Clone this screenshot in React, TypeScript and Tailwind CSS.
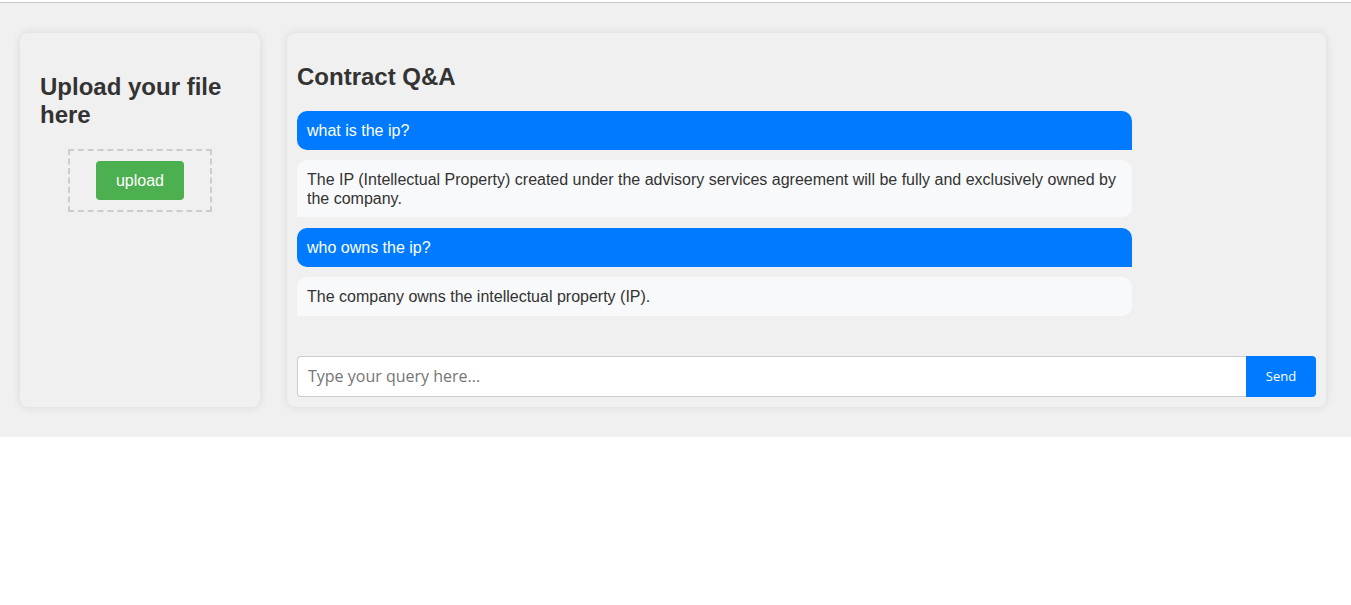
import React from "react";

export default function App() {
  return (
    <div className="min-h-[605px] bg-white" style={{ fontFamily: '"Liberation Sans", Arial, sans-serif' }}>
      <div className="h-[2px] bg-white" />
      <div className="border-t border-[#c8c8c8] bg-[#f0f0f0] h-[435px] pt-[30px] pl-[20px] flex gap-[27px]">
        <div className="w-[240px] h-[374px] bg-[#f0f0f0] rounded-[8px] shadow-[0_0_10px_rgba(0,0,0,0.1)] p-[20px] flex flex-col">
          <h2 className="mt-[20px] mb-[20px] text-[24px] leading-[28px] font-bold text-[#333]">
            Upload your file here
          </h2>
          <div className="mx-auto w-[144px] h-[63px] border-2 border-dashed border-[#ccc] flex justify-center pt-[10px]">
            <button className="h-[39px] px-[20px] bg-[#4caf50] text-white text-[16px] leading-[19px] rounded-[4px]">
              upload
            </button>
          </div>
        </div>
        <div className="w-[1039px] h-[374px] bg-[#f0f0f0] rounded-[8px] shadow-[0_0_10px_rgba(0,0,0,0.1)] p-[10px] flex flex-col">
          <h2 className="mt-[20px] mb-[20px] text-[24px] leading-[28px] font-bold text-[#333]">
            Contract Q&amp;A
          </h2>
          <div className="flex-1 flex flex-col">
            <div className="w-[835px] h-[39px] bg-[#007bff] text-white text-[16px] leading-[19px] px-[10px] py-[10px] rounded-[10px] rounded-br-none">
              what is the ip?
            </div>
            <div className="mt-[10px] w-[835px] h-[57px] bg-[#f8f9fa] text-[#333] text-[16px] leading-[19px] px-[10px] pt-[10px] rounded-[10px] rounded-bl-none">
              The IP (Intellectual Property) created under the advisory services agreement will be fully and exclusively owned by the company.
            </div>
            <div className="mt-[11px] w-[835px] h-[39px] bg-[#007bff] text-white text-[16px] leading-[19px] px-[10px] py-[10px] rounded-[10px] rounded-br-none">
              who owns the ip?
            </div>
            <div className="mt-[10px] w-[835px] h-[39px] bg-[#f8f9fa] text-[#333] text-[16px] leading-[19px] px-[10px] py-[10px] rounded-[10px] rounded-bl-none">
              The company owns the intellectual property (IP).
            </div>
          </div>
          <div className="flex h-[41px]">
            <input
              className="flex-1 h-full bg-white border border-[#ccc] border-r-0 rounded-l-[4px] px-[10px] pb-[1px] text-[16px] placeholder:text-[#757575] outline-none"
              style={{ fontFamily: '"Open Sans", "Noto Sans", sans-serif' }}
              placeholder="Type your query here..."
            />
            <button
              className="w-[70px] h-full bg-[#007bff] text-white text-[13px] rounded-r-[4px]"
              style={{ fontFamily: '"Open Sans", "Noto Sans", sans-serif' }}
            >
              Send
            </button>
          </div>
        </div>
      </div>
    </div>
  );
}
